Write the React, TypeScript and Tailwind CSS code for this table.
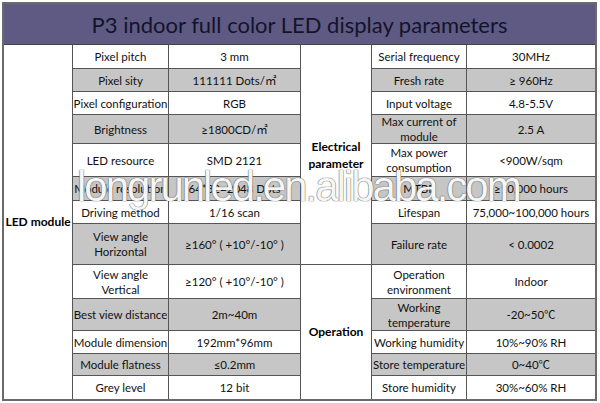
const ROWS = [
  ['Pixel pitch', '3 mm', 'Serial frequency', '30MHz'],
  ['Pixel sity', '111111 Dots/㎡', 'Fresh rate', '≥ 960Hz'],
  ['Pixel configuration', 'RGB', 'Input voltage', '4.8-5.5V'],
  ['Brightness', '≥1800CD/㎡', 'Max current of\nmodule', '2.5 A'],
  ['LED resource', 'SMD 2121', 'Max power\nconsumption', '<900W/sqm'],
  ['Module resolution', '64*32=2048 Dots', 'MTBF', '≥10,000 hours'],
  ['Driving method', '1/16 scan', 'Lifespan', '75,000~100,000 hours'],
  ['View angle\nHorizontal', '≥160° ( +10°/-10° )', 'Failure rate', '< 0.0002'],
  ['View angle\nVertical', '≥120° ( +10°/-10° )', 'Operation\nenvironment', 'Indoor'],
  ['Best view distance', '2m~40m', 'Working\ntemperature', '-20~50℃'],
  ['Module dimension', '192mm*96mm', 'Working humidity', '10%~90% RH'],
  ['Module flatness', '≤0.2mm', 'Store temperature', '0~40℃'],
  ['Grey level', '12 bit', 'Store humidity', '30%~60% RH'],
]

function Cell({ text, gray, col }: { text: string; gray: boolean; col: string }) {
  return (
    <div
      className={`${col} flex items-center justify-center whitespace-pre-line text-center leading-[15px] ${
        gray ? 'bg-[#c6c6c6]' : 'bg-white'
      }`}
    >
      {text}
    </div>
  )
}

export default function App() {
  return (
    <div className="relative m-[2px] w-[595px] border-2 border-[#6a6a6a] bg-white font-[Lato,'Noto_Sans_CJK_SC',sans-serif] text-[11.5px] text-[#111]">
      <div className="flex h-[41px] items-center justify-center border-b border-[#444] bg-[#5e5a84] text-[22px] text-[#141428]">
        P3 indoor full color LED display parameters
      </div>

      <div className="grid grid-cols-[68px_95px_131px_70px_94px_128px] grid-rows-[23px_22px_22px_28px_32px_23px_22px_40px_33px_31px_22px_21px_23px] gap-px bg-[#555]">
        <div className="col-start-1 row-span-13 row-start-1 flex items-center justify-center bg-white text-[12px] font-bold text-black">
          LED module
        </div>
        <div className="col-start-4 row-span-8 row-start-1 flex items-center justify-center bg-white text-center text-[12px] leading-[17px] font-bold text-black">
          Electrical
          <br />
          parameter
        </div>
        <div className="col-start-4 row-span-5 row-start-9 flex items-center justify-center bg-white text-[12px] font-bold text-black">
          Operation
        </div>
        {ROWS.map(([ln, lv, rn, rv], i) => {
          const gray = i % 2 === 1
          return [
            <Cell key={`ln${i}`} col="col-start-2" text={ln} gray={gray} />,
            <Cell key={`lv${i}`} col="col-start-3" text={lv} gray={gray} />,
            <Cell key={`rn${i}`} col="col-start-5" text={rn} gray={gray} />,
            <Cell key={`rv${i}`} col="col-start-6" text={rv} gray={gray} />,
          ]
        })}
      </div>

      {/* watermark */}
      <div className="pointer-events-none absolute top-[162px] left-[73px] font-['Liberation_Sans',Arial,sans-serif] text-[42px] leading-none tracking-[-2px] text-[#f6f6f6] [text-shadow:0_0_1px_#555,0_0_1px_#555]">
        longrunled.en.alibaba.com
      </div>
    </div>
  )
}
